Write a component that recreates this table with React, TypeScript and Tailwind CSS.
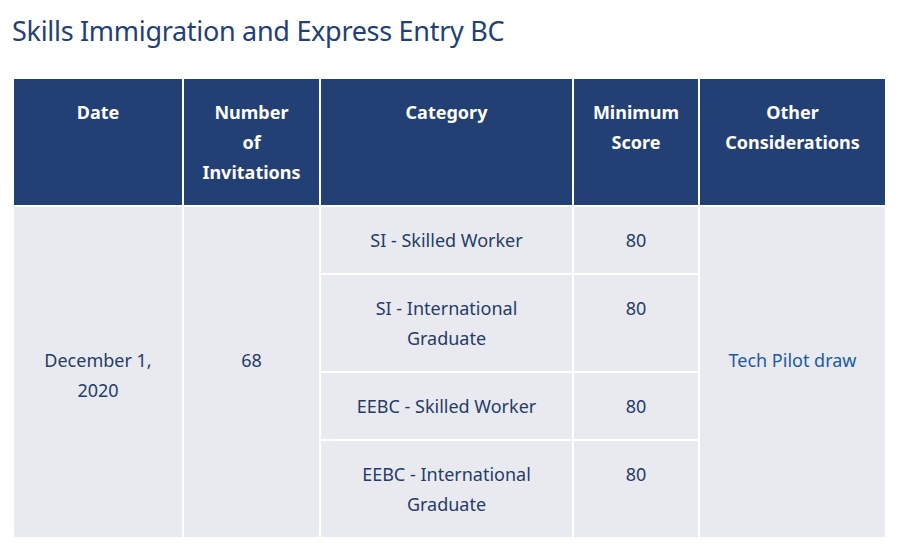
import React from "react";

const body = "bg-[#e9eaef] text-[#253c69] text-[18px] leading-[30px] text-center";

export default function App() {
  const headers: React.ReactNode[] = [
    "Date",
    <>Number<br />of<br />Invitations</>,
    "Category",
    <>Minimum<br />Score</>,
    <>Other<br />Considerations</>,
  ];
  return (
    <div className="w-[898px] h-[553px] bg-white" style={{ fontFamily: '"Noto Sans", "Open Sans", sans-serif' }}>
      <h1 className="pl-[12px] pt-[13px] h-[79px] text-[27px] leading-[36px] text-[#234075] tracking-[-0.3px]">
        Skills Immigration and Express Entry BC
      </h1>
      <div className="ml-[14px] grid grid-cols-[168px_135px_251px_124px_185px] grid-rows-[126px_66px_96px_66px_96px] gap-[2px] w-[871px]">
        {headers.map((h, i) => (
          <div key={i} className="bg-[#234075] text-white font-bold text-[18px] leading-[30px] text-center pt-[18px] px-[8px] whitespace-nowrap">
            {h}
          </div>
        ))}
        <div className={`${body} row-span-4 flex items-center justify-center px-[20px] pt-[6px]`}>December 1, 2020</div>
        <div className={`${body} row-span-4 flex items-center justify-center pb-[24px]`}>68</div>
        <div className={`${body} pt-[18px] px-[20px]`}>SI - Skilled Worker</div>
        <div className={`${body} pt-[18px]`}>80</div>
        <div className={`${body} row-span-4 flex items-center justify-center pb-[24px]`}>
          <span className="text-[#1a5ba6]">Tech Pilot draw</span>
        </div>
        <div className={`${body} pt-[18px] px-[40px]`}>SI - International Graduate</div>
        <div className={`${body} pt-[18px]`}>80</div>
        <div className={`${body} pt-[18px] px-[20px]`}>EEBC - Skilled Worker</div>
        <div className={`${body} pt-[18px]`}>80</div>
        <div className={`${body} pt-[18px] px-[40px]`}>EEBC - International Graduate</div>
        <div className={`${body} pt-[18px]`}>80</div>
      </div>
    </div>
  );
}
